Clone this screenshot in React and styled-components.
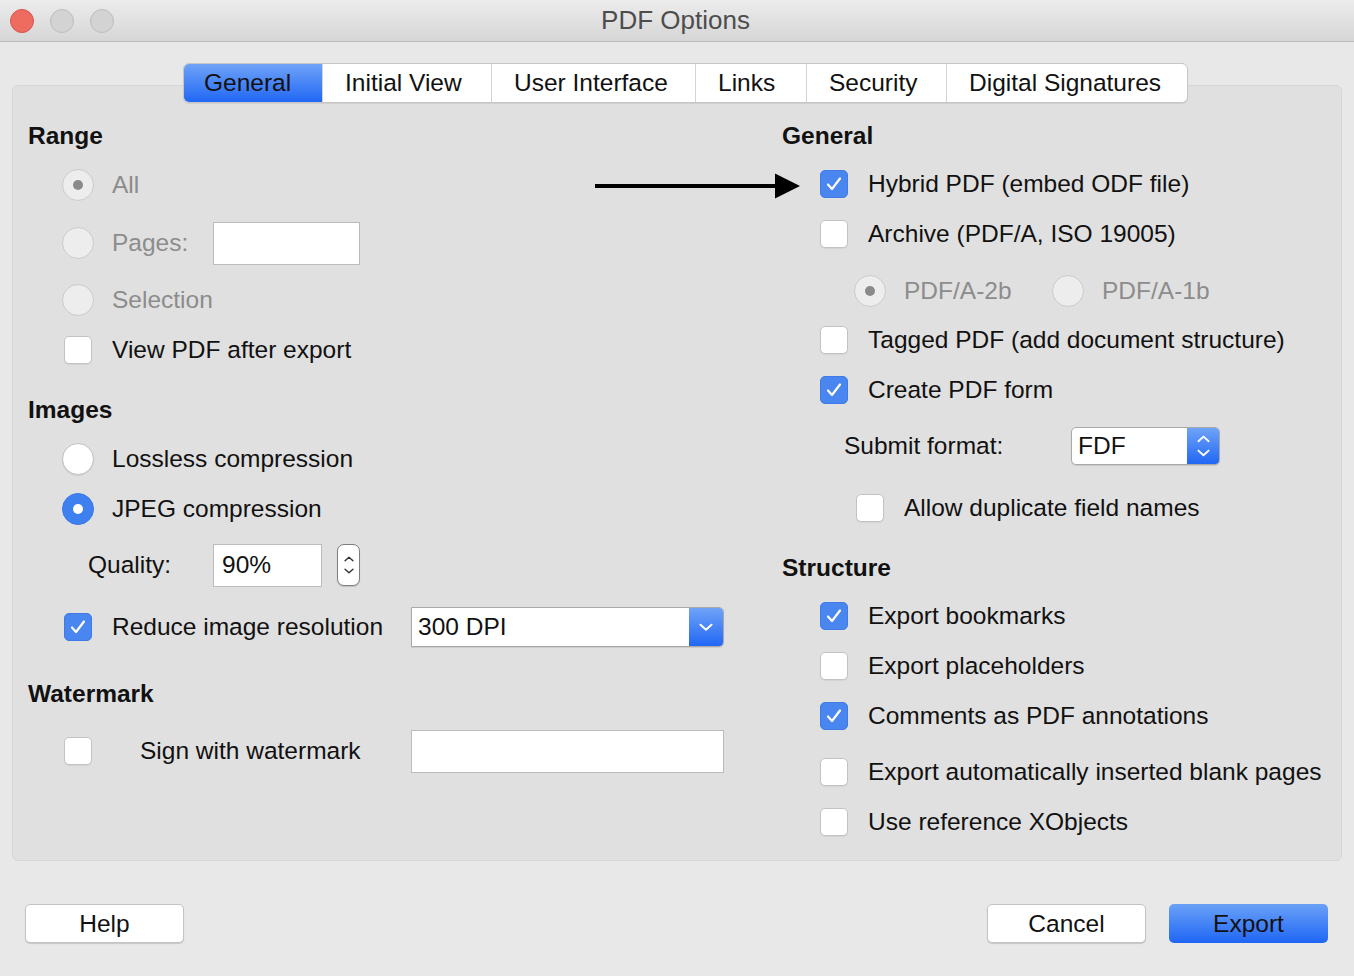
import React from 'react';
import styled, { createGlobalStyle, css } from 'styled-components';

const GlobalStyle = createGlobalStyle`
  html, body {
    margin: 0;
    padding: 0;
    background: #e8e8e8;
  }
  body {
    font-family: "Liberation Sans", Arial, Helvetica, sans-serif;
    color: #111;
  }
`;

const Check = () => (
  <svg width="28" height="28" viewBox="0 0 28 28">
    <path d="M8 14.5 L12 19 L20 8.5" fill="none" stroke="#fff" strokeWidth="2.2" strokeLinecap="round" strokeLinejoin="round" />
  </svg>
);

const Checkbox = ({ checked }) => (
  <Slot>
    <Box $checked={checked}>{checked && <Check />}</Box>
  </Slot>
);

const Radio = ({ checked, disabled }) => (
  <Slot>
    <Circle $checked={checked} $disabled={disabled}>
      {checked && <Dot $disabled={disabled} />}
    </Circle>
  </Slot>
);

const Option = ({ type = 'check', checked, disabled, children, mt, indent }) => (
  <Row $mt={mt} $indent={indent}>
    {type === 'radio' ? <Radio checked={checked} disabled={disabled} /> : <Checkbox checked={checked} />}
    <Label $disabled={disabled}>{children}</Label>
  </Row>
);

const ChevronDown = ({ color = '#fff', size = 14 }) => (
  <svg width={size} height={size * 0.6} viewBox="0 0 14 8">
    <path d="M1.5 1.5 L7 6.5 L12.5 1.5" fill="none" stroke={color} strokeWidth="2" strokeLinecap="round" strokeLinejoin="round" />
  </svg>
);

const ChevronUp = ({ color = '#fff', size = 14 }) => (
  <svg width={size} height={size * 0.6} viewBox="0 0 14 8">
    <path d="M1.5 6.5 L7 1.5 L12.5 6.5" fill="none" stroke={color} strokeWidth="2" strokeLinecap="round" strokeLinejoin="round" />
  </svg>
);

const Arrow = () => (
  <ArrowSvg width="205" height="28" viewBox="0 0 205 28">
    <line x1="0" y1="14" x2="182" y2="14" stroke="#000" strokeWidth="4" />
    <polygon points="180,1.5 205,14 180,26.5" fill="#000" />
  </ArrowSvg>
);

const tabs = [
  { name: 'General', w: 138 },
  { name: 'Initial View', w: 169 },
  { name: 'User Interface', w: 204 },
  { name: 'Links', w: 111 },
  { name: 'Security', w: 140 },
  { name: 'Digital Signatures', w: 241 },
];

export default function App() {
  return (
    <>
      <GlobalStyle />
      <Window>
        <TitleBar>
          <Lights>
            <Light $color="#ee6b60" $border="#d5554c" />
            <Light $color="#d3d3d3" $border="#bdbdbd" />
            <Light $color="#d3d3d3" $border="#bdbdbd" />
          </Lights>
          <Title>PDF Options</Title>
        </TitleBar>

        <TabBar>
          {tabs.map((t, i) => (
            <Tab key={t.name} $active={i === 0} $w={t.w}>{t.name}</Tab>
          ))}
        </TabBar>

        <Panel>
          <Column>
            <Row><Heading>Range</Heading></Row>
            <Option type="radio" checked disabled mt={9}>All</Option>
            <Row $mt={18}>
              <Radio disabled />
              <Label $disabled $w={101}>Pages:</Label>
              <TextBox $w={147} $h={43} />
            </Row>
            <Option type="radio" disabled mt={17}>Selection</Option>
            <Option mt={10}>View PDF after export</Option>

            <Row $mt={20}><Heading>Images</Heading></Row>
            <Option type="radio" mt={9}>Lossless compression</Option>
            <Option type="radio" checked mt={10}>JPEG compression</Option>
            <Row $mt={16} $indent={60}>
              <Label $w={125}>Quality:</Label>
              <TextBox $w={109} $h={43}>90%</TextBox>
              <Spinner>
                <ChevronUp color="#333" size={10} />
                <ChevronDown color="#333" size={10} />
              </Spinner>
            </Row>
            <Row $mt={22}>
              <Checkbox checked />
              <Label $w={299}>Reduce image resolution</Label>
              <Dropdown $w={313} $h={40}>
                <DropText>300 DPI</DropText>
                <DropButton $w={34}><ChevronDown size={14} /></DropButton>
              </Dropdown>
            </Row>

            <Row $mt={27}><Heading>Watermark</Heading></Row>
            <Row $mt={17}>
              <Checkbox />
              <Label $w={271} $ml={46}>Sign with watermark</Label>
              <TextBox $w={313} $h={43} />
            </Row>
          </Column>

          <Column>
            <Row><Heading>General</Heading></Row>
            <Row $mt={8} $indent={36}>
              <Arrow />
              <Checkbox checked />
              <Label>Hybrid PDF (embed ODF file)</Label>
            </Row>
            <Option mt={10} indent={36}>Archive (PDF/A, ISO 19005)</Option>
            <Row $mt={17} $indent={72}>
              <Radio checked disabled />
              <Label $disabled $w={148}>PDF/A-2b</Label>
              <Radio disabled />
              <Label $disabled>PDF/A-1b</Label>
            </Row>
            <Option mt={9} indent={36}>Tagged PDF (add document structure)</Option>
            <Option checked mt={10} indent={36}>Create PDF form</Option>
            <Row $mt={16} $indent={62}>
              <Label $w={227}>Submit format:</Label>
              <Dropdown $w={149} $h={38} $round>
                <DropText>FDF</DropText>
                <DropButton $w={32} $stack>
                  <ChevronUp size={13} />
                  <ChevronDown size={13} />
                </DropButton>
              </Dropdown>
            </Row>
            <Option mt={22} indent={72}>Allow duplicate field names</Option>

            <Row $mt={20}><Heading>Structure</Heading></Row>
            <Option checked mt={8} indent={36}>Export bookmarks</Option>
            <Option mt={10} indent={36}>Export placeholders</Option>
            <Option checked mt={10} indent={36}>Comments as PDF annotations</Option>
            <Option mt={16} indent={36}>Export automatically inserted blank pages</Option>
            <Option mt={10} indent={36}>Use reference XObjects</Option>
          </Column>
        </Panel>

        <Footer>
          <Button>Help</Button>
          <Spacer />
          <Button>Cancel</Button>
          <Button $primary>Export</Button>
        </Footer>
      </Window>
    </>
  );
}

const Window = styled.div`
  min-height: 100vh;
  display: flex;
  flex-direction: column;
  background: #e8e8e8;
`;

const TitleBar = styled.div`
  height: 41px;
  border-bottom: 1px solid #b9b9b9;
  background: linear-gradient(#ececec, #d6d6d6);
  display: flex;
  align-items: center;
  position: relative;
`;

const Lights = styled.div`
  display: flex;
  gap: 16px;
  padding-left: 10px;
`;

const Light = styled.div`
  width: 22px;
  height: 22px;
  border-radius: 50%;
  background: ${(p) => p.$color};
  border: 1px solid ${(p) => p.$border};
`;

const Title = styled.div`
  flex: 1;
  text-align: center;
  margin-right: 117px;
  font-size: 26px;
  color: #4d4d4d;
`;

const TabBar = styled.div`
  display: flex;
  align-self: flex-start;
  margin: 21px 0 0 183px;
  height: 40px;
  box-sizing: border-box;
  border: 1px solid #c6c6c6;
  border-radius: 6px;
  background: #fff;
  overflow: hidden;
  position: relative;
  z-index: 1;
  box-shadow: 0 1px 1px rgba(0, 0, 0, 0.08);
`;

const Tab = styled.div`
  width: ${(p) => p.$w}px;
  box-sizing: border-box;
  display: flex;
  align-items: center;
  padding-left: 22px;
  font-size: 24.5px;
  white-space: nowrap;
  color: #111;
  border-left: 1px solid #d4d4d4;
  &:first-child {
    border-left: none;
    padding-left: 20px;
  }
  ${(p) =>
    p.$active &&
    css`
      background: linear-gradient(#6fa3f8, #2167f4);
    `}
`;

const Panel = styled.div`
  margin: -18px 12px 0;
  padding: 30px 0 18px 15px;
  background: #e0e0e0;
  border: 1px solid #d6d6d6;
  border-radius: 6px;
  display: grid;
  grid-template-columns: 754px 1fr;
`;

const Column = styled.div`
  display: flex;
  flex-direction: column;
`;

const Row = styled.div`
  position: relative;
  height: 40px;
  display: flex;
  align-items: center;
  margin-top: ${(p) => p.$mt || 0}px;
  padding-left: ${(p) => (p.$indent !== undefined ? p.$indent : 34)}px;
`;

const Heading = styled.div`
  margin-left: -34px;
  font-size: 24.5px;
  font-weight: bold;
  color: #111;
`;

const Slot = styled.div`
  width: 32px;
  height: 32px;
  flex: none;
  display: flex;
  align-items: center;
  justify-content: center;
  margin-right: 18px;
`;

const Box = styled.div`
  width: 28px;
  height: 28px;
  box-sizing: border-box;
  border-radius: 5px;
  display: flex;
  ${(p) =>
    p.$checked
      ? css`
          background: #4a86f0;
          border: 1px solid #3f7ae6;
        `
      : css`
          background: #fff;
          border: 1px solid #c3c3c3;
          box-shadow: 0 1px 1px rgba(0, 0, 0, 0.06);
        `}
  svg {
    margin: -1px;
  }
`;

const Circle = styled.div`
  width: 32px;
  height: 32px;
  box-sizing: border-box;
  border-radius: 50%;
  display: flex;
  align-items: center;
  justify-content: center;
  ${(p) =>
    p.$disabled
      ? css`
          background: #ededed;
          border: 1px solid #cbcbcb;
        `
      : p.$checked
      ? css`
          background: #3f80f0;
          border: 1px solid #3a78e6;
        `
      : css`
          background: #fff;
          border: 1px solid #c1c1c1;
          box-shadow: 0 1px 1px rgba(0, 0, 0, 0.08);
        `}
`;

const Dot = styled.div`
  width: 10px;
  height: 10px;
  border-radius: 50%;
  background: ${(p) => (p.$disabled ? '#8a8a8a' : '#fff')};
`;

const Label = styled.div`
  font-size: 24.5px;
  white-space: nowrap;
  color: ${(p) => (p.$disabled ? '#8c8c8c' : '#111')};
  ${(p) => p.$w && `width: ${p.$w}px; flex: none;`}
  ${(p) => p.$ml && `margin-left: ${p.$ml - 18}px;`}
`;

const TextBox = styled.div`
  width: ${(p) => p.$w}px;
  height: ${(p) => p.$h}px;
  box-sizing: border-box;
  flex: none;
  background: #fff;
  border: 1px solid #bcbcbc;
  font-size: 24.5px;
  display: flex;
  align-items: center;
  padding-left: 8px;
`;

const Spinner = styled.div`
  width: 23px;
  height: 42px;
  box-sizing: border-box;
  margin-left: 15px;
  background: #fff;
  border: 1px solid #7e7e7e;
  border-radius: 7px;
  display: flex;
  flex-direction: column;
  align-items: center;
  justify-content: center;
  gap: 6px;
  box-shadow: 0 1px 1px rgba(0, 0, 0, 0.15);
`;

const Dropdown = styled.div`
  width: ${(p) => p.$w}px;
  height: ${(p) => p.$h}px;
  box-sizing: border-box;
  flex: none;
  display: flex;
  background: #fff;
  border: 1px solid #a9a9a9;
  border-radius: ${(p) => (p.$round ? '5px' : '0 5px 5px 0')};
  overflow: hidden;
  box-shadow: 0 1px 1px rgba(0, 0, 0, 0.1);
`;

const DropText = styled.div`
  flex: 1;
  display: flex;
  align-items: center;
  padding-left: 6px;
  font-size: 24.5px;
`;

const DropButton = styled.div`
  width: ${(p) => p.$w}px;
  display: flex;
  flex-direction: column;
  align-items: center;
  justify-content: center;
  gap: ${(p) => (p.$stack ? '6px' : '0')};
  background: linear-gradient(#6fa3f8, #2167f4);
`;

const ArrowSvg = styled.svg`
  position: absolute;
  left: -187px;
  top: 8px;
`;

const Footer = styled.div`
  display: flex;
  gap: 23px;
  margin-top: 43px;
  padding: 0 26px 0 25px;
`;

const Spacer = styled.div`
  flex: 1;
`;

const Button = styled.div`
  width: 159px;
  height: 39px;
  box-sizing: border-box;
  border-radius: 5px;
  display: flex;
  align-items: center;
  justify-content: center;
  font-size: 24.5px;
  color: #111;
  ${(p) =>
    p.$primary
      ? css`
          background: linear-gradient(#6aa1f7, #1f66f5);
        `
      : css`
          background: #fff;
          border: 1px solid #c4c4c4;
          box-shadow: 0 1px 1px rgba(0, 0, 0, 0.15);
        `}
`;
